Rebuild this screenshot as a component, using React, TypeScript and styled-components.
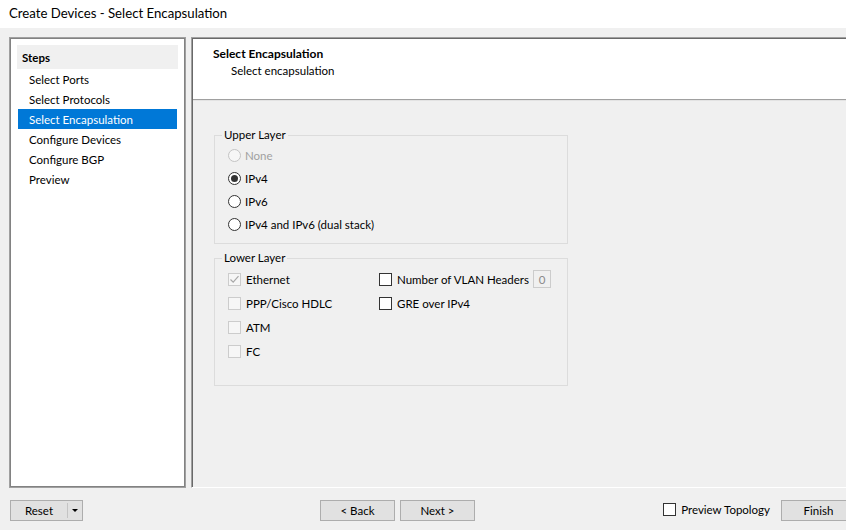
import styled, { createGlobalStyle } from 'styled-components';

const FONT = 'Lato, "Liberation Sans", "DejaVu Sans", sans-serif';

const GlobalStyle = createGlobalStyle`
  html, body {
    margin: 0;
    padding: 0;
  }
  body {
    width: 846px;
    height: 530px;
    overflow: hidden;
    background: #f0f0f0;
    font-family: ${FONT};
    font-size: 11.5px;
    color: #000;
  }
`;

const Window = styled.div`
  display: flex;
  flex-direction: column;
  width: 846px;
  height: 530px;
  overflow: hidden;
  background: #f0f0f0;
`;

const TitleBar = styled.div`
  flex: none;
  height: 28px;
  box-sizing: border-box;
  padding: 0 0 2px 9px;
  display: flex;
  align-items: center;
  background: #fff;
  font-size: 13.2px;
  color: #000;
`;

const Main = styled.div`
  flex: none;
  height: 460px;
  box-sizing: border-box;
  padding: 9px 0 0 9px;
  display: flex;
  gap: 5px;
`;

const StepsPanel = styled.div`
  width: 177px;
  box-sizing: border-box;
  border: 1px solid #a0a0a0;
  box-shadow: inset 0 0 0 1px #828282;
  background: #fff;
  padding: 7px 7px;
  display: flex;
  flex-direction: column;
`;

const StepsHeader = styled.div`
  height: 24px;
  display: flex;
  align-items: center;
  padding-left: 5px;
  background: #f0f0f0;
  font-weight: bold;
`;

const StepItem = styled.div<{ $active?: boolean }>`
  height: 20px;
  margin: 0 1px;
  padding-left: 11px;
  display: flex;
  align-items: center;
  background: ${({ $active }) => ($active ? '#0078d7' : 'transparent')};
  color: ${({ $active }) => ($active ? '#fff' : '#000')};
`;

const ContentPanel = styled.div`
  flex: 1;
  margin-right: -4px;
  box-sizing: border-box;
  border-top: 1px solid #a0a0a0;
  border-left: 1px solid #a0a0a0;
  border-bottom: 1px solid #fff;
  box-shadow: inset 1px 1px 0 #696969;
  display: flex;
  flex-direction: column;
  background: #f0f0f0;
`;

const PageHeader = styled.div`
  height: 61px;
  flex: none;
  box-sizing: border-box;
  margin: 1px 0 0 1px;
  padding: 7px 0 0 20px;
  background: #fff;
  border-bottom: 1px solid #a0a0a0;
  box-shadow: 0 1px 0 #e3e3e3;
`;

const PageTitle = styled.div`
  font-weight: bold;
  font-size: 12px;
  line-height: 15px;
`;

const PageSubtitle = styled.div`
  margin-top: 2px;
  padding-left: 18px;
  line-height: 15px;
`;

const PageBody = styled.div`
  padding: 28px 0 0 22px;
  display: flex;
  flex-direction: column;
  gap: 7px;
`;

const GroupBox = styled.fieldset<{ $padBottom: number }>`
  width: 354px;
  box-sizing: border-box;
  margin: 0;
  padding: 2px 0 ${({ $padBottom }) => $padBottom}px 13px;
  border: 1px solid #dcdcdc;
  min-inline-size: 0;
`;

const GroupLegend = styled.legend`
  margin-left: -6px;
  padding: 0 2px;
  line-height: 14px;
  color: #000;
`;

const OptionRow = styled.label<{ $height: number; $disabled?: boolean }>`
  height: ${({ $height }) => $height}px;
  display: flex;
  align-items: center;
  gap: 4px;
  color: ${({ $disabled }) => ($disabled ? '#a0a0a0' : '#000')};
  white-space: nowrap;
`;

const RadioCircle = styled.span<{ $checked?: boolean; $disabled?: boolean }>`
  flex: none;
  width: 13px;
  height: 13px;
  box-sizing: border-box;
  border-radius: 50%;
  border: 1px solid ${({ $disabled }) => ($disabled ? '#c4c4c4' : '#333')};
  background: ${({ $disabled }) => ($disabled ? '#f6f6f6' : '#fff')};
  display: flex;
  align-items: center;
  justify-content: center;

  &::after {
    content: '';
    display: ${({ $checked }) => ($checked ? 'block' : 'none')};
    width: 7px;
    height: 7px;
    border-radius: 50%;
    background: #333;
  }
`;

const CheckSquare = styled.span<{ $disabled?: boolean }>`
  flex: none;
  width: 13px;
  height: 13px;
  margin-right: 1px;
  box-sizing: border-box;
  border: 1px solid ${({ $disabled }) => ($disabled ? '#cccccc' : '#333')};
  background: ${({ $disabled }) => ($disabled ? '#f6f6f6' : '#fff')};
  display: flex;
  align-items: center;
  justify-content: center;
`;

const LowerGrid = styled.div`
  display: grid;
  grid-template-columns: 151px 172px;
  grid-template-rows: repeat(4, 24px);
  grid-auto-flow: column;
`;

const VlanRow = styled.div`
  display: flex;
  align-items: center;
  justify-content: space-between;
`;

const NumberBox = styled.span`
  width: 18px;
  height: 18px;
  box-sizing: border-box;
  border: 1px solid #cccccc;
  background: #f0f0f0;
  color: #8a8a8a;
  display: flex;
  align-items: center;
  justify-content: center;
`;

const Footer = styled.div`
  flex: none;
  height: 42px;
  box-sizing: border-box;
  padding: 12px 0 0 10px;
  display: flex;
  align-items: flex-start;
`;

const Button = styled.button<{ $width?: number; $gap?: number }>`
  flex: none;
  width: ${({ $width }) => $width ?? 75}px;
  height: 21px;
  margin-left: ${({ $gap }) => $gap ?? 0}px;
  box-sizing: border-box;
  padding: 0;
  border: 1px solid #adadad;
  background: #e1e1e1;
  font-family: ${FONT};
  font-size: 11.5px;
  color: #000;
  display: flex;
  align-items: center;
  justify-content: center;
`;

const SplitButton = styled.div`
  flex: none;
  width: 73px;
  height: 21px;
  box-sizing: border-box;
  border: 1px solid #adadad;
  background: #e1e1e1;
  display: flex;
`;

const SplitMain = styled.span`
  width: 56px;
  display: flex;
  align-items: center;
  justify-content: center;
`;

const SplitArrow = styled.span`
  flex: 1;
  border-left: 1px solid #c4c4c4;
  margin: 2px 0;
  display: flex;
  align-items: center;
  justify-content: center;

  &::after {
    content: '';
    border-left: 3px solid transparent;
    border-right: 3px solid transparent;
    border-top: 3px solid #000;
  }
`;

const PreviewCheck = styled.label`
  margin-left: auto;
  margin-right: 11px;
  height: 18px;
  display: flex;
  align-items: center;
  gap: 4px;
  white-space: nowrap;
`;

const FinishButton = styled(Button)`
  margin-right: -10px;
`;

function Radio({ label, checked, disabled }: { label: string; checked?: boolean; disabled?: boolean }) {
  return (
    <OptionRow $height={23} $disabled={disabled}>
      <RadioCircle $checked={checked} $disabled={disabled} />
      {label}
    </OptionRow>
  );
}

function Check({ label, checked, disabled }: { label: string; checked?: boolean; disabled?: boolean }) {
  return (
    <OptionRow $height={24}>
      <CheckSquare $disabled={disabled}>
        {checked && (
          <svg width="11" height="11" viewBox="0 0 11 11">
            <path d="M1.5 5.5 L4.2 8.2 L9.5 2.2" fill="none" stroke="#a8a8a8" strokeWidth="1.2" />
          </svg>
        )}
      </CheckSquare>
      {label}
    </OptionRow>
  );
}

const steps = ['Select Ports', 'Select Protocols', 'Select Encapsulation', 'Configure Devices', 'Configure BGP', 'Preview'];

export default function App() {
  return (
    <>
      <GlobalStyle />
      <Window>
        <TitleBar>Create Devices - Select Encapsulation</TitleBar>
        <Main>
          <StepsPanel>
            <StepsHeader>Steps</StepsHeader>
            {steps.map((s) => (
              <StepItem key={s} $active={s === 'Select Encapsulation'}>{s}</StepItem>
            ))}
          </StepsPanel>
          <ContentPanel>
            <PageHeader>
              <PageTitle>Select Encapsulation</PageTitle>
              <PageSubtitle>Select encapsulation</PageSubtitle>
            </PageHeader>
            <PageBody>
              <GroupBox $padBottom={7}>
                <GroupLegend>Upper Layer</GroupLegend>
                <Radio label="None" disabled />
                <Radio label="IPv4" checked />
                <Radio label="IPv6" />
                <Radio label="IPv4 and IPv6 (dual stack)" />
              </GroupBox>
              <GroupBox $padBottom={22}>
                <GroupLegend>Lower Layer</GroupLegend>
                <LowerGrid>
                  <Check label="Ethernet" checked disabled />
                  <Check label="PPP/Cisco HDLC" disabled />
                  <Check label="ATM" disabled />
                  <Check label="FC" disabled />
                  <VlanRow>
                    <Check label="Number of VLAN Headers" />
                    <NumberBox>0</NumberBox>
                  </VlanRow>
                  <Check label="GRE over IPv4" />
                </LowerGrid>
              </GroupBox>
            </PageBody>
          </ContentPanel>
        </Main>
        <Footer>
          <SplitButton>
            <SplitMain>Reset</SplitMain>
            <SplitArrow />
          </SplitButton>
          <Button $gap={237}>&lt; Back</Button>
          <Button $gap={5}>Next &gt;</Button>
          <PreviewCheck>
            <CheckSquare />
            Preview Topology
          </PreviewCheck>
          <FinishButton>Finish</FinishButton>
        </Footer>
      </Window>
    </>
  );
}
